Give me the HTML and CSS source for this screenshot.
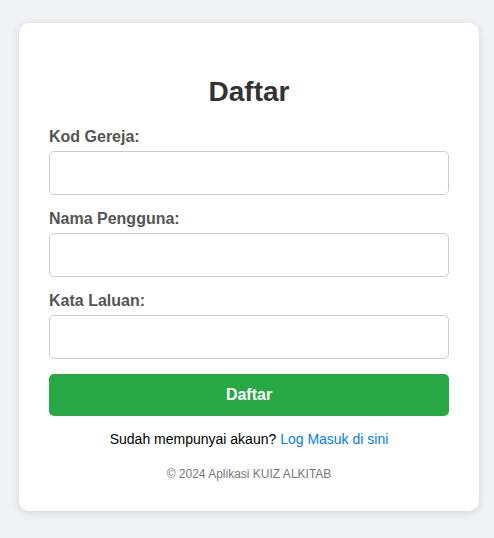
FILE: index.html
```html
<!DOCTYPE html>
<html>
<head>
<meta charset="utf-8">
<link rel="stylesheet" href="styles.css">
</head>
<body>
<div class="card">
  <h2 class="title">Daftar</h2>
  <form class="form">
    <label class="label">Kod Gereja:</label>
    <input class="input" type="text">
    <label class="label">Nama Pengguna:</label>
    <input class="input" type="text">
    <label class="label">Kata Laluan:</label>
    <input class="input" type="password">
    <button class="btn" type="button">Daftar</button>
  </form>
  <p class="switch">Sudah mempunyai akaun? <a class="link" href="#">Log Masuk di sini</a></p>
  <p class="footer">© 2024 Aplikasi KUIZ ALKITAB</p>
</div>
</body>
</html>
```
FILE: styles.css
```css
html, body {
  margin: 0;
  padding: 0;
  background: #f0f2f5;
  font-family: "Liberation Sans", Arial, sans-serif;
}
body {
  padding: 23px 15px 27px 19px;
}
.card {
  width: 400px;
  padding: 30px;
  background: #fff;
  border-radius: 10px;
  box-shadow: 0 2px 10px rgba(0,0,0,0.12);
}
.title {
  margin: 23px 0 20px;
  font-size: 28px;
  line-height: 32px;
  text-align: center;
  color: #333;
}
.form {
  display: flex;
  flex-direction: column;
}
.label {
  font-size: 16px;
  font-weight: bold;
  color: #555;
  line-height: 18px;
  margin-bottom: 5px;
}
.input {
  box-sizing: border-box;
  height: 44px;
  width: 100%;
  border: 1px solid #ccc;
  border-radius: 5px;
  margin: 0 0 15px;
  padding: 10px;
  font-size: 16px;
}
.btn {
  height: 42px;
  width: 100%;
  border: none;
  border-radius: 5px;
  background: #28a745;
  color: #fff;
  font-family: inherit;
  font-size: 16px;
  font-weight: bold;
}
.switch {
  margin: 15px 0 0;
  text-align: center;
  font-size: 14px;
  line-height: 16px;
  color: #000;
}
.link {
  color: #007bff;
  text-decoration: none;
}
.footer {
  margin: 20px 0 0;
  text-align: center;
  font-size: 12px;
  line-height: 14px;
  color: #777;
}
```
